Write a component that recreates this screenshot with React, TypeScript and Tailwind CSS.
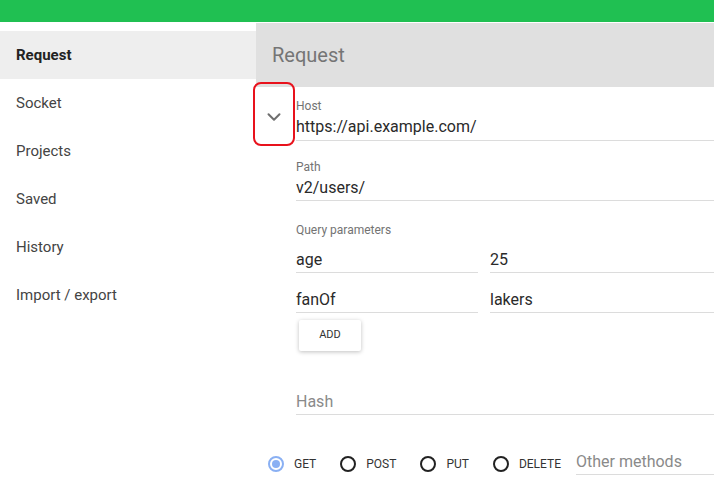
import { ChevronDown } from "lucide-react";

const navItems = ["Request", "Socket", "Projects", "Saved", "History", "Import / export"];

function Field(props: { label?: string; value?: string; placeholder?: string; className?: string }) {
  return (
    <div className={props.className}>
      {props.label && <div className="text-[12px] leading-4 text-[#737373] mb-[3px]">{props.label}</div>}
      <div
        className={
          "text-[16px] leading-5 pb-[2px] border-b border-[#dcdcdc] " +
          (props.value ? "text-[#2a2a2a]" : "text-[#8a8a8a]")
        }
      >
        {props.value || props.placeholder}
      </div>
    </div>
  );
}

function Radio(props: { label: string; checked?: boolean }) {
  return (
    <div className="flex items-center mt-[3px]">
      {props.checked ? (
        <span className="w-4 h-4 rounded-full border-2 border-[#8ab0f3] flex items-center justify-center">
          <span className="w-2 h-2 rounded-full bg-[#8ab0f3]" />
        </span>
      ) : (
        <span className="w-4 h-4 rounded-full border-2 border-[#222]" />
      )}
      <span className="ml-[10px] text-[12px] leading-[18px] text-[#333] uppercase">{props.label}</span>
    </div>
  );
}

export default function App() {
  return (
    <div className="relative w-[714px] h-[490px] overflow-hidden bg-white font-['Roboto',sans-serif]">
      <div className="h-[22px] bg-[#20c052]" />
      <div className="flex">
        <div className="w-[256px] pt-[9px]">
          {navItems.map((item, i) => (
            <div
              key={item}
              className={
                "h-12 px-4 flex items-center text-[15px] " +
                (i === 0 ? "bg-[#eeeeee] font-bold text-[#222]" : "text-[#444]")
              }
            >
              {item}
            </div>
          ))}
        </div>
        <div className="flex-1 pt-[1px]">
          <div className="h-16 bg-[#e0e0e0] px-4 flex items-center text-[20px] text-[#757575]">Request</div>
          <div className="pl-10">
            <Field className="mt-[11px] [&>div:last-child]:pb-[3px]" label="Host" value="https://api.example.com/" />
            <Field className="mt-[18px]" label="Path" value="v2/users/" />
            <div className="mt-[21px] text-[12px] leading-4 text-[#737373]">Query parameters</div>
            <div className="mt-3 flex gap-3">
              <Field className="w-[182px]" value="age" />
              <Field className="flex-1" value="25" />
            </div>
            <div className="mt-[17px] flex gap-3">
              <Field className="w-[182px]" value="fanOf" />
              <Field className="flex-1" value="lakers" />
            </div>
            <button className="mt-[7px] ml-[3px] w-[62px] h-[31px] rounded-[2px] bg-white text-[11px] text-[#333] shadow-[0_1px_4px_rgba(0,0,0,0.25)]">
              ADD
            </button>
            <Field className="mt-[41px]" placeholder="Hash" />
          </div>
          <div className="mt-[37px] pl-3 flex items-start">
            <Radio label="GET" checked />
            <div className="ml-[24px]">
              <Radio label="POST" />
            </div>
            <div className="ml-[24px]">
              <Radio label="PUT" />
            </div>
            <div className="ml-[24px]">
              <Radio label="DELETE" />
            </div>
            <Field className="ml-[15px] flex-1" placeholder="Other methods" />
          </div>
        </div>
      </div>
      <div className="absolute left-[253px] top-[82px] w-[42px] h-[64px] rounded-[8px] border-2 border-[#e8121c] flex items-center justify-center">
        <ChevronDown size={22} strokeWidth={2.2} className="text-[#6f6f6f] mt-[6px]" />
      </div>
    </div>
  );
}
